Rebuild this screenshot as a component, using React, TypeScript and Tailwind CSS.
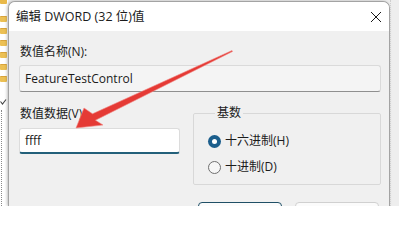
import React from 'react';

const folderTops = [16, 28, 40, 52, 63, 75];

function LeftTree() {
  return (
    <div className="w-[8px] h-full shrink-0 bg-white flex flex-col">
      {/* folder icons of the registry tree behind the dialog */}
      <div className="h-[4px] w-[7px] bg-[#e9b949] rounded-b-[1px]" />
      <div className="flex flex-col gap-[6px] mt-[12px]">
        {folderTops.map((t) => (
          <div key={t} className="h-[6px] w-[7px] bg-[#ecc054] border-t border-[#d9a43a] rounded-[1px]" />
        ))}
      </div>
      <svg width="8" height="8" viewBox="0 0 8 8" className="mt-[16px]">
        <path d="M0.5 3.5 L2.5 6 L6 1.5" fill="none" stroke="#444" strokeWidth="1.1" />
      </svg>
      <div className="mt-[4px] ml-[1px] flex-1 border-l border-dotted border-[#8a8a8a]" />
    </div>
  );
}

function CloseIcon() {
  return (
    <svg width="12" height="12" viewBox="0 0 12 12">
      <path d="M1 1 L11 11 M11 1 L1 11" stroke="#1a1a1a" strokeWidth="1" fill="none" />
    </svg>
  );
}

function Radio({ checked, label }: { checked?: boolean; label: string }) {
  return (
    <div className="flex items-center h-[16px] gap-[4px]">
      {checked ? (
        <span className="w-[13px] h-[13px] rounded-full bg-[#1b5e8c] flex items-center justify-center">
          <span className="w-[5px] h-[5px] rounded-full bg-white" />
        </span>
      ) : (
        <span className="w-[13px] h-[13px] rounded-full border border-[#6f6f6f] bg-[#f6f6f6]" />
      )}
      <span className="text-[12px] leading-[16px]">{label}</span>
    </div>
  );
}

export default function App() {
  return (
    <div className="relative w-[399px] h-[206px] overflow-hidden bg-[#eeeeee] flex font-['Open_Sans','Noto_Sans_CJK_SC',sans-serif] text-[#1b1b1b]">
      <LeftTree />

      {/* Dialog */}
      <div className="w-[382px] h-[205px] shrink-0 mt-[1px] flex flex-col rounded-t-[7px] border border-b-0 border-[#a3a3a3] bg-[#f0f0f0] overflow-hidden shadow-[-1px_0_3px_rgba(0,0,0,0.25)]">
        <div className="h-[29px] shrink-0 bg-white flex items-center justify-between pl-[7px] pr-[7px]">
          <span className="text-[12.5px] leading-[16px]">编辑 DWORD (32 位)值</span>
          <CloseIcon />
        </div>

        <div className="flex flex-col pl-[10px] pr-[8px] pt-[13px]">
          <div className="text-[12px] leading-[16px] pl-[1px]">数值名称(N):</div>
          <div className="mt-[5px] h-[27px] flex items-center pl-[5px] text-[12px] bg-[#f4f4f4] border border-[#dadada] border-b-[#8f8f8f] rounded-[3px]">
            FeatureTestControl
          </div>

          <div className="mt-[14px] flex gap-[13px]">
            <div className="w-[161px] flex flex-col">
              <div className="text-[12px] leading-[16px] pl-[1px]">数值数据(V):</div>
              <div className="mt-[6px] h-[26px] flex items-center pl-[5px] text-[12px] bg-white border border-[#dcdcdc] border-b-2 border-b-[#23607a] rounded-[3px]">
                ffff
              </div>
            </div>

            <fieldset className="w-[188px] border border-[#d8d8d8] rounded-[2px] pl-[14px] pt-[13px] pb-[9px] flex flex-col gap-[10px]">
              <legend className="ml-[7px] px-[2px] text-[12px] leading-[14px]">基数</legend>
              <Radio checked label="十六进制(H)" />
              <Radio label="十进制(D)" />
            </fieldset>
          </div>

          {/* OK / Cancel buttons, only their top edges are in view */}
          <div className="mt-[17px] mr-[2px] flex justify-end gap-[13px]">
            <button aria-label="确定" className="w-[84px] h-[24px] rounded-[4px] border border-[#1f4f66] bg-[#fbfbfb]" />
            <button aria-label="取消" className="w-[84px] h-[24px] rounded-[4px] border border-[#d0d0d0] bg-[#fbfbfb]" />
          </div>
        </div>
      </div>

      <div className="flex-1 border-l border-dotted border-[#cfcfcf]" />

      {/* red annotation arrow over the dialog */}
      <svg className="absolute inset-0 pointer-events-none" width="399" height="206" viewBox="0 0 399 206">
        <polygon
          points="76,128 84,108 92.5,113.8 232,50.5 232.5,51.5 95.5,120.2 103,125"
          fill="#e53a35"
          stroke="#f08a86"
          strokeWidth="0.6"
          strokeLinejoin="round"
        />
      </svg>
    </div>
  );
}
